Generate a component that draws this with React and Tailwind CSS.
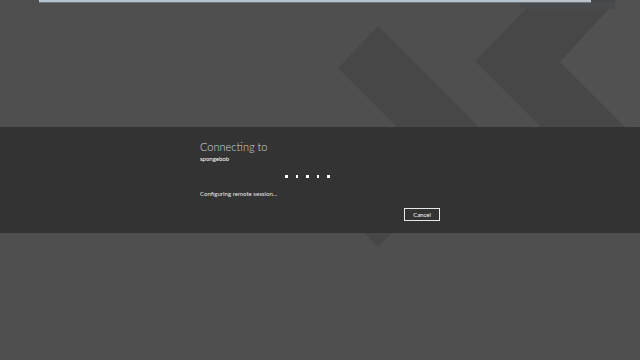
import React from 'react';

const Backdrop = () => (
    <svg className="absolute inset-0" width="640" height="360" viewBox="0 0 640 360">
        {/* capped diagonal strip */}
        <polygon points="378,26 338,68 470,200 552,200" fill="#474747" />
        {/* chevron band */}
        <polygon points="535,0 475,61 590,176 640,176 640,120 560,62 617,0" fill="#474747" />
        <polygon points="617,0 560,62 640,142 640,0" fill="#515151" />
        {/* tip peeking out below the band */}
        <polygon points="350,219 406,219 378,247" fill="#474747" />
        {/* faint shade under the top bar */}
        <rect x="520" y="2" width="95" height="7" fill="#484b4e" />
    </svg>
);

const App = () => {
    return (
        <div className="relative w-[640px] h-[360px] overflow-hidden bg-[#4f4f4f] font-['Lato','Liberation_Sans',sans-serif]">
            <Backdrop />

            {/* top bar */}
            <div className="absolute top-0 left-[39px] w-[552px] h-[3px] bg-[#b9c3cb] border-b border-[#6c757c]" />

            <div className="relative pt-[127px]">
                <div className="h-[106px] bg-[#333333] pl-[200px] pt-[12px]">
                    <div className="text-[11px] leading-[15px] font-light text-[#d4d4d4]">Connecting to</div>
                    <div className="text-[6px] leading-[9px] text-white">spongebob</div>

                    <div className="flex gap-[8px] ml-[85px] mt-[12px]">
                        {[0, 1, 2, 3, 4].map((i) => (
                            <span key={i} className="w-[2.5px] h-[2.5px] bg-white" />
                        ))}
                    </div>

                    <div className="mt-[11px] text-[6.1px] leading-[10px] text-[#e6e6e6]">Configuring remote session...</div>

                    <div className="flex ml-[204px] mt-[9px]">
                        <button className="w-[36px] h-[13px] border border-[#e8e8e8] text-[6px] leading-[11px] text-white">
                            Cancel
                        </button>
                    </div>
                </div>
            </div>
        </div>
    );
};

export default App;
